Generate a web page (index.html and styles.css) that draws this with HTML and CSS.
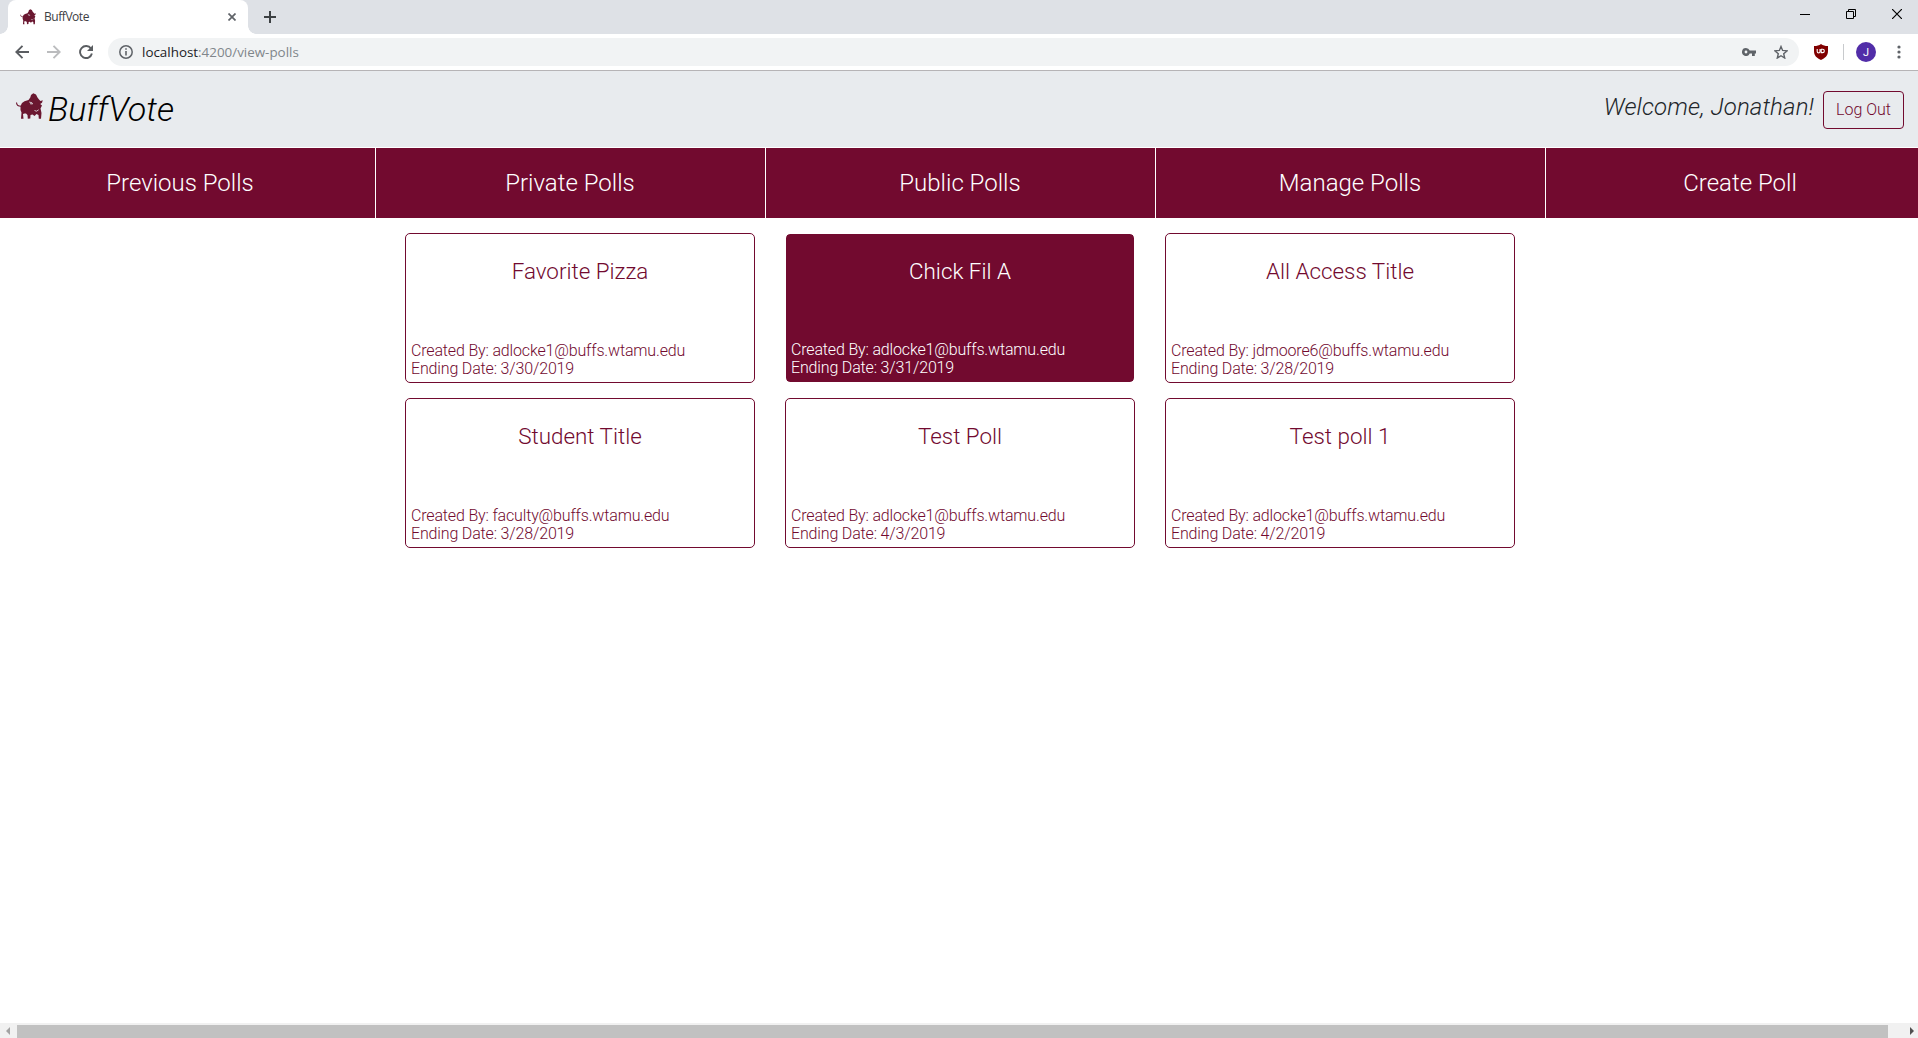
FILE: index.html
```html
<!DOCTYPE html>
<html lang="en">
<head>
<meta charset="utf-8">
<title>BuffVote</title>
<link rel="stylesheet" href="styles.css">
</head>
<body>
<svg class="defs" width="0" height="0">
  <symbol id="buffalo" viewBox="0 0 27 27">
    <path d="M.5 9.500Q.8 13.300 5 13.300" fill="none" stroke="currentColor" stroke-width="1.100"/>
    <path d="M4.500 13 6 10 8.500 8.300 12.500 7 14.300 4.500 15 2 17.300.3 20 1.500 21.500 4.500 23 6.500 24.500 8 26.800 7.300 26 9.700 24.200 11 26 12.500 24.500 15.500 25.500 20 25 25.700 22.800 25.700 22.500 22 20.500 21 18.500 23 16.500 21.500 14.500 22 14.300 25.500 11.800 25.700 11.500 22 10 20.500 8.500 20.500 7 21 7.500 25.700 5 25.700 5.500 19.500 4.500 17Z" fill="currentColor"/>
    <path d="m13.200 9 2.800.8.500 1.200-2.500-.3M18.500 17.500l2 .7 2.200-1.400" fill="none" stroke="#e8ebee" stroke-width=".8"/>
  </symbol>
</svg>

<div class="tabs">
  <div class="tab">
    <svg class="favicon"><use href="#buffalo"/></svg>
    <span class="tab-title">BuffVote</span>
    <svg class="tab-close" width="8" height="8" viewBox="0 0 8 8"><path d="m.5.5 7 7m0-7-7 7" stroke="#5f6368" stroke-width="1.700"/></svg>
  </div>
  <svg class="new-tab" width="12" height="12" viewBox="0 0 12 12"><path d="M6 0v12M0 6h12" stroke="#3c4043" stroke-width="2"/></svg>
  <div class="window-controls">
    <svg width="10" height="10" viewBox="0 0 10 10"><path d="M0 5.500h10" stroke="#000"/></svg>
    <svg width="10" height="10" viewBox="0 0 10 10"><path d="M.5 2.500h7v7h-7zM2.500 2.500v-2h7v7h-2" fill="none" stroke="#000"/></svg>
    <svg width="10" height="10" viewBox="0 0 10 10"><path d="m0 0 10 10m0-10L0 10" stroke="#000" stroke-width="1.200"/></svg>
  </div>
</div>

<div class="toolbar">
  <svg class="nav-icon" width="14" height="14" viewBox="0 0 14 14"><path d="M14 7H1.500M7.500.8 1.300 7l6.200 6.200" fill="none" stroke="#5a5d61" stroke-width="1.900"/></svg>
  <svg class="nav-icon" width="14" height="14" viewBox="0 0 14 14"><path d="M0 7h12.500M6.500.8 12.700 7l-6.200 6.200" fill="none" stroke="#bbbcbe" stroke-width="1.900"/></svg>
  <svg class="nav-icon" width="14" height="14" viewBox="0 0 14 14"><path d="M12 3.600A6 6 0 1 0 12.900 8.500" fill="none" stroke="#5a5d61" stroke-width="1.900"/><path d="M14 0v6H8z" fill="#5a5d61"/></svg>
  <div class="address">
    <svg width="14" height="14" viewBox="0 0 14 14"><circle cx="7" cy="7" r="6.200" fill="none" stroke="#5f6368" stroke-width="1.500"/><path d="M7 6v4.500M7 3.200v1.600" stroke="#5f6368" stroke-width="1.600"/></svg>
    <span class="url"><b>localhost</b>:4200/view-polls</span>
    <svg class="key" width="14" height="8" viewBox="0 0 14 8"><path fill-rule="evenodd" d="M4 0a4 4 0 0 1 3.700 2.600H14v2.800h-1.200V8H10V5.400H7.700A4 4 0 1 1 4 0Zm0 2.600a1.400 1.400 0 1 0 0 2.800 1.400 1.400 0 0 0 0-2.800Z" fill="#5f6368"/></svg>
    <svg class="star" width="14" height="14" viewBox="0 0 14 14"><path d="m7 1.500 1.600 3.900 4.500.4-3.400 2.900 1 4.300L7 10.700 3.300 13l1-4.300L.9 5.800l4.500-.4Z" fill="none" stroke="#5f6368" stroke-width="1.400"/></svg>
  </div>
  <div class="extension">
    <svg width="14" height="16" viewBox="0 0 14 16"><path d="M7 0c2 1.500 4 2 7 2v5c0 5-3 7-7 9-4-2-7-4-7-9V2c3 0 5-.5 7-2Z" fill="#800000"/><path d="M3.200 5v2.500a1.400 1.400 0 0 0 2.800 0V5m1.200.3v3.300h1.400a1.700 1.700 0 0 0 0-3.400H7" fill="none" stroke="#fff" stroke-width="1.100"/></svg>
  </div>
  <div class="divider"></div>
  <div class="avatar">J</div>
  <svg class="menu" width="4" height="14" viewBox="0 0 4 14"><g fill="#5f6368"><circle cx="2" cy="2" r="1.600"/><circle cx="2" cy="7" r="1.600"/><circle cx="2" cy="12" r="1.600"/></g></svg>
</div>

<header class="header">
  <svg class="logo"><use href="#buffalo"/></svg>
  <h1 class="brand">BuffVote</h1>
  <span class="welcome">Welcome, Jonathan!</span>
  <button class="logout">Log Out</button>
</header>

<nav class="nav">
  <a>Previous Polls</a>
  <a>Private Polls</a>
  <a>Public Polls</a>
  <a>Manage Polls</a>
  <a>Create Poll</a>
</nav>

<main class="polls">
  <article class="card"><h2>Favorite Pizza</h2><p>Created By: adlocke1@buffs.wtamu.edu<br>Ending Date: 3/30/2019</p></article>
  <article class="card active"><h2>Chick Fil A</h2><p>Created By: adlocke1@buffs.wtamu.edu<br>Ending Date: 3/31/2019</p></article>
  <article class="card"><h2>All Access Title</h2><p>Created By: jdmoore6@buffs.wtamu.edu<br>Ending Date: 3/28/2019</p></article>
  <article class="card"><h2>Student Title</h2><p>Created By: faculty@buffs.wtamu.edu<br>Ending Date: 3/28/2019</p></article>
  <article class="card"><h2>Test Poll</h2><p>Created By: adlocke1@buffs.wtamu.edu<br>Ending Date: 4/3/2019</p></article>
  <article class="card"><h2>Test poll 1</h2><p>Created By: adlocke1@buffs.wtamu.edu<br>Ending Date: 4/2/2019</p></article>
</main>

<div class="scrollbar">
  <svg width="17" height="15" viewBox="0 0 17 15"><path d="M10 4v8L6 8z" fill="#a3a3a3"/></svg>
  <div class="thumb"></div>
  <svg class="scroll-right" width="30" height="15" viewBox="0 0 30 15"><path d="M22 4v8l4-4z" fill="#505050"/></svg>
</div>
</body>
</html>
```
FILE: styles.css
```css
* { box-sizing: border-box; }

body {
  margin: 0;
  height: 1038px;
  overflow: hidden;
  display: flex;
  flex-direction: column;
  background: #fff;
  font-family: Roboto, "Liberation Sans", sans-serif;
  font-weight: 300;
}

svg { display: block; flex: none; }
.defs { position: absolute; }

/* Browser tab strip */
.tabs {
  height: 34px;
  flex: none;
  display: flex;
  background: #dee1e6;
  padding-left: 8px;
}
.tab {
  position: relative;
  width: 240px;
  background: #fff;
  border-radius: 8px 8px 0 0;
  display: flex;
  align-items: center;
  padding: 0 12px;
}
.tab::before,
.tab::after {
  content: "";
  position: absolute;
  bottom: 0;
  width: 8px;
  height: 8px;
}
.tab::before { left: -8px; background: radial-gradient(circle at 0 0, transparent 7.5px, #fff 8px); }
.tab::after { right: -8px; background: radial-gradient(circle at 100% 0, transparent 7.5px, #fff 8px); }
.favicon { width: 16px; height: 16px; color: #6a1730; }
.tab-title {
  flex: 1;
  margin: -1px 0 0 8px;
  font: 12px "Open Sans", "Noto Sans", sans-serif;
  letter-spacing: -0.45px;
  color: #3c4043;
}
.new-tab { margin: 11px 0 0 16px; }
.window-controls {
  display: flex;
  gap: 36px;
  margin: 9px 16px 0 auto;
}

/* Browser toolbar */
.toolbar {
  height: 37px;
  flex: none;
  display: flex;
  align-items: center;
  padding: 0 17px 0 15px;
  border-bottom: 1px solid #b6b4b6;
}
.nav-icon { margin-right: 18px; }
.address {
  flex: 1;
  height: 28px;
  margin-left: -3px;
  border-radius: 14px;
  background: #f1f3f4;
  display: flex;
  align-items: center;
  padding: 0 11px;
}
.url {
  flex: 1;
  margin-left: 9px;
  font: 13.4px "Open Sans", "Noto Sans", sans-serif;
  color: #80868b;
}
.url b { font-weight: 400; color: #202124; }
.key { margin-top: -1px; }
.star { margin-left: 18px; }
.extension { margin-left: 15px; }
.divider { width: 1px; height: 16px; margin: 0 12px 0 15px; background: #c8cacd; }
.avatar {
  width: 20px;
  height: 20px;
  border-radius: 50%;
  background: #512da8;
  color: #fff;
  font-size: 11px;
  font-weight: 400;
  line-height: 21px;
  text-align: center;
}
.menu { margin-left: 21px; }

/* Page header */
.header {
  height: 76px;
  flex: none;
  display: flex;
  align-items: flex-start;
  padding: 20px 14px 0 16px;
  background: #e8ebee;
}
.logo { width: 27px; height: 27px; margin-top: 2px; color: #6a1730; }
.brand {
  margin: -1px auto 0 5px;
  font-size: 34px;
  font-style: italic;
  font-weight: 300;
  line-height: 38px;
  color: #000;
}
.welcome {
  margin: 1px 9px 0 0;
  font-size: 24px;
  font-style: italic;
  line-height: 30px;
  letter-spacing: 0.14px;
  color: #212529;
}
.logout {
  width: 81px;
  height: 38px;
  padding: 0 0 2px;
  border: 1px solid #720a2f;
  border-radius: 4px;
  background: none;
  color: #720a2f;
  font: 300 16px Roboto, sans-serif;
}

.nav {
  height: 70px;
  flex: none;
  display: grid;
  grid-template-columns: repeat(5, 390px);
  margin: 1px 0 0 -14px;
  background: #720a2f;
}
.nav a {
  border-right: 1px solid #fff;
  padding-right: 1px;
  color: #fff;
  font-size: 24px;
  line-height: 71px;
  text-align: center;
}

/* Poll cards */
.polls {
  flex: 1;
  display: grid;
  grid-template-columns: repeat(3, 350px);
  grid-auto-rows: 150px;
  align-content: start;
  gap: 15px 30px;
  padding: 15px 0 0 405px;
}
.card {
  display: flex;
  flex-direction: column;
  justify-content: space-between;
  border: 1px solid #720a2f;
  border-radius: 5px;
  padding: 23px 5px 4px;
  color: #720a2f;
}
.card h2 {
  margin: 0;
  font-size: 22.4px;
  font-weight: 300;
  line-height: 28px;
  text-align: center;
}
.card p { margin: 0; font-size: 16px; line-height: 18px; letter-spacing: -0.16px; }
.card.active {
  border-color: #fff;
  background: #720a2f;
  background-clip: padding-box;
  color: #fff;
  padding-bottom: 5px;
}

.scrollbar {
  height: 15px;
  flex: none;
  display: flex;
  background: #f1f1f1;
}
.thumb { flex: 1; margin-top: 2px; background: #c1c1c1; }
```
